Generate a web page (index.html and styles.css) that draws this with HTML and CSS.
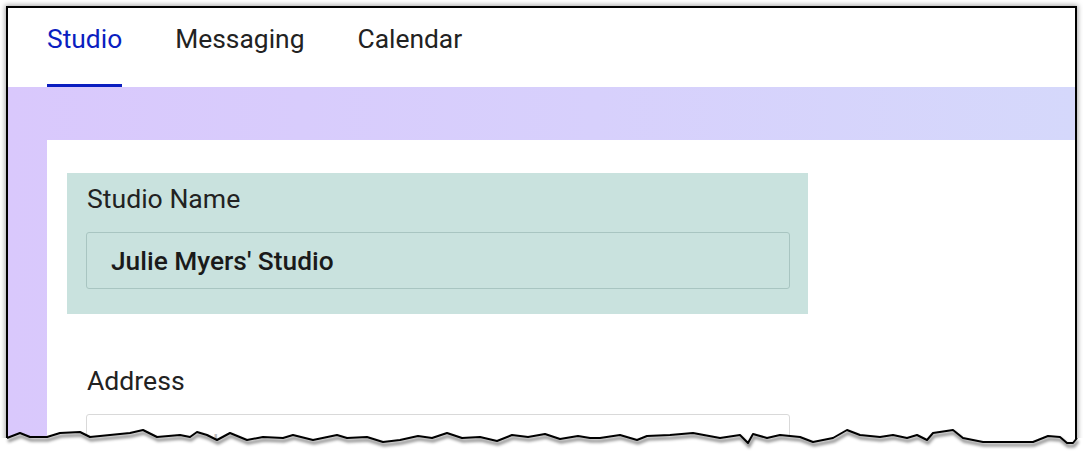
FILE: index.html
```html
<!DOCTYPE html>
<html lang="en">
<head>
<meta charset="utf-8">
<title>Studio settings</title>
<link rel="stylesheet" href="styles.css">
</head>
<body>
<div class="frame">
  <nav class="tabs">
    <a class="tab active">Studio</a>
    <a class="tab">Messaging</a>
    <a class="tab">Calendar</a>
  </nav>
  <div class="stage">
    <div class="panel">
      <div class="field highlighted">
        <label class="label">Studio Name</label>
        <div class="input filled">Julie Myers' Studio</div>
      </div>
      <div class="field">
        <label class="label">Address</label>
        <div class="input empty">Street Address</div>
      </div>
    </div>
  </div>
</div>
<svg class="torn" width="1083" height="34" viewBox="0 420 1083 34" xmlns="http://www.w3.org/2000/svg">
  <defs>
    <filter id="blur" x="-5%" y="-50%" width="110%" height="200%">
      <feGaussianBlur stdDeviation="1.6"/>
    </filter>
  </defs>
  <path fill="#fff" d="M0,454 L0,438 L7,438 L20,433 L30,437 L47,437 L60,433 L80,432 L90,437 L110,435 L130,433 L143,430 L157,437 L180,435 L190,437 L197,432 L207,435 L217,440 L230,433 L247,440 L263,437 L283,438 L293,435 L313,440 L337,435 L347,438 L367,437 L383,442 L400,440 L418,436 L432,438 L447,433 L462,438 L480,437 L497,441 L512,435 L528,437 L545,434 L560,439 L578,436 L590,438 L600,438 L620,435 L637,440 L647,436 L670,435 L693,433 L720,438 L740,435 L748,443 L753,434 L767,438 L780,435 L800,437 L813,442 L833,438 L847,430 L860,435 L880,437 L893,435 L907,438 L917,435 L927,440 L933,433 L953,430 L963,438 L983,442 L1017,442 L1033,442 L1048,436 L1060,437 L1067,443 L1073,443 L1077,438 L1083,438 L1083,454 Z"/>
  <polyline class="shade" filter="url(#blur)" transform="translate(1,3)" points="7,438 20,433 30,437 47,437 60,433 80,432 90,437 110,435 130,433 143,430 157,437 180,435 190,437 197,432 207,435 217,440 230,433 247,440 263,437 283,438 293,435 313,440 337,435 347,438 367,437 383,442 400,440 418,436 432,438 447,433 462,438 480,437 497,441 512,435 528,437 545,434 560,439 578,436 590,438 600,438 620,435 637,440 647,436 670,435 693,433 720,438 740,435 748,443 753,434 767,438 780,435 800,437 813,442 833,438 847,430 860,435 880,437 893,435 907,438 917,435 927,440 933,433 953,430 963,438 983,442 1017,442 1033,442 1048,436 1060,437 1067,443 1073,443 1077,438"/>
  <polyline class="edge" points="7,438 20,433 30,437 47,437 60,433 80,432 90,437 110,435 130,433 143,430 157,437 180,435 190,437 197,432 207,435 217,440 230,433 247,440 263,437 283,438 293,435 313,440 337,435 347,438 367,437 383,442 400,440 418,436 432,438 447,433 462,438 480,437 497,441 512,435 528,437 545,434 560,439 578,436 590,438 600,438 620,435 637,440 647,436 670,435 693,433 720,438 740,435 748,443 753,434 767,438 780,435 800,437 813,442 833,438 847,430 860,435 880,437 893,435 907,438 917,435 927,440 933,433 953,430 963,438 983,442 1017,442 1033,442 1048,436 1060,437 1067,443 1073,443 1077,438"/>
</svg>
</body>
</html>
```
FILE: styles.css
```css
html, body {
  margin: 0;
  padding: 0;
  background: #fff;
  overflow: hidden;
  height: 454px;
}

body {
  font-family: Roboto, "Liberation Sans", Arial, sans-serif;
  color: #222;
  position: relative;
}

.frame {
  box-sizing: border-box;
  margin: 6px 0 0 6px;
  width: 1071px;
  height: 444px;
  border: 2px solid #000;
  border-bottom: none;
  box-shadow: 0 0 5px 1px rgba(0, 0, 0, 0.35);
  background: #fff;
  overflow: hidden;
  display: flex;
  flex-direction: column;
}

.tabs {
  display: flex;
  gap: 53px;
  padding-left: 39px;
  height: 79px;
  background: #fff;
}

.tab {
  box-sizing: border-box;
  height: 79px;
  padding-top: 16px;
  font-size: 26.4px;
  line-height: 30px;
  color: #222;
  cursor: pointer;
}

.tab.active {
  color: #0b1ec0;
  border-bottom: 3px solid #0b1ec0;
}

.stage {
  flex: 1;
  display: flex;
  flex-direction: column;
  padding: 53px 0 0 39px;
  background: linear-gradient(90deg, #d9c8fc 0%, #d7d0fc 55%, #d5d8fb 100%);
}

.panel {
  flex: 1;
  background: #fff;
  padding: 33px 0 0 20px;
  display: flex;
  flex-direction: column;
  gap: 41px;
}

.field {
  box-sizing: border-box;
  width: 741px;
  padding: 11px 18px 25px 19px;
  display: flex;
  flex-direction: column;
  gap: 18px;
}

.field.highlighted {
  background: #c9e2de;
}

.label {
  font-size: 26.6px;
  line-height: 30px;
  color: #222;
  padding-left: 1px;
}

.input {
  box-sizing: border-box;
  height: 57px;
  border: 1px solid #a8c5c1;
  border-radius: 3px;
  padding: 0 0 0 24px;
  display: flex;
  align-items: center;
  font-size: 26.3px;
}

.input.filled {
  font-weight: 500;
  color: #1a1a1a;
}

.input.empty {
  border-color: #d9d9d9;
  color: #bdbdbd;
  background: #fff;
  align-items: flex-start;
  padding-top: 14px;
}

.torn {
  position: absolute;
  left: 0;
  top: 420px;
}

.torn .edge {
  fill: none;
  stroke: #000;
  stroke-width: 2;
  stroke-linejoin: round;
}

.torn .shade {
  fill: none;
  stroke: rgba(0, 0, 0, 0.45);
  stroke-width: 3;
}
```
